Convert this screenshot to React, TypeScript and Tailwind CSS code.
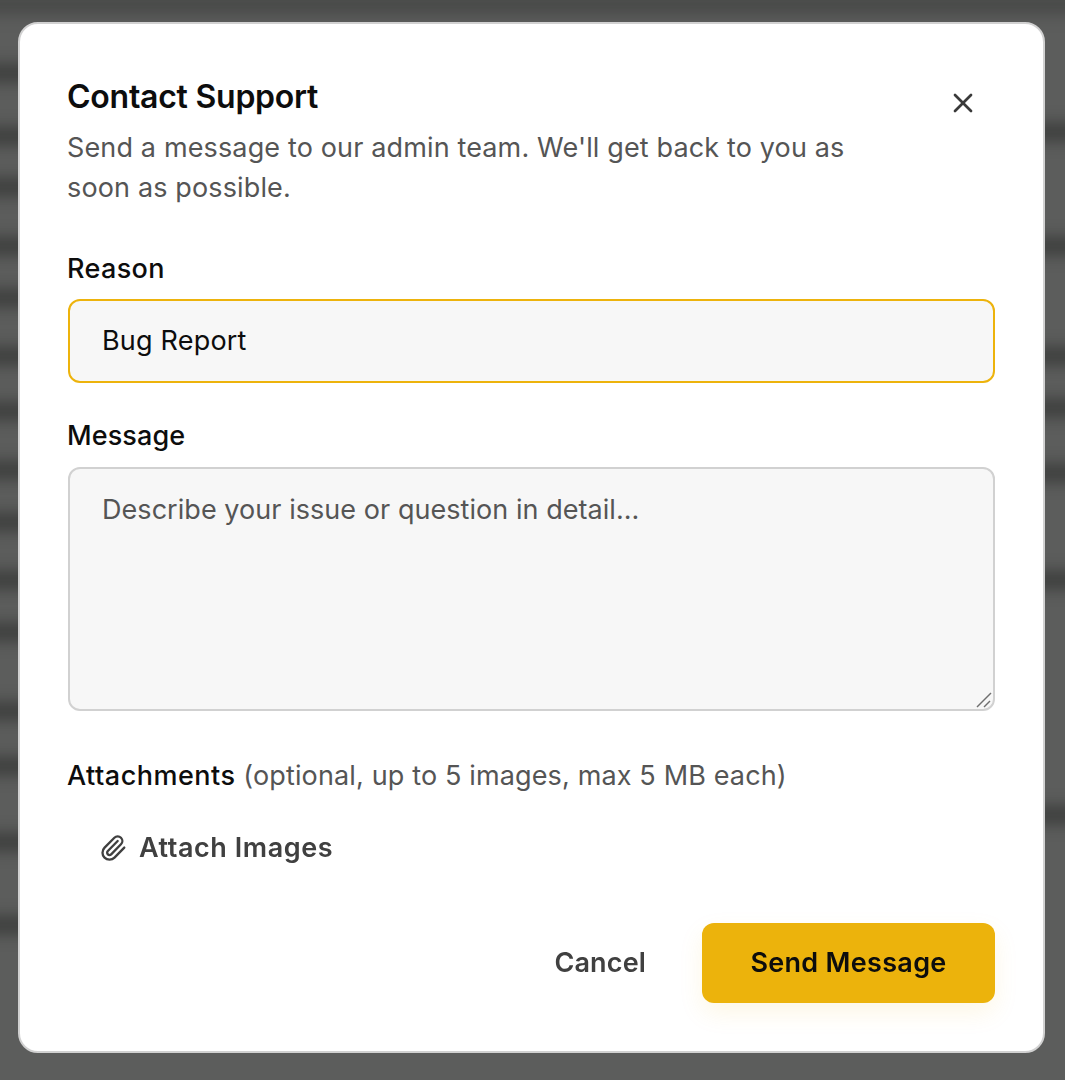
import { Paperclip, X } from "lucide-react";

const leftRows = [65, 128, 179, 238, 290, 348, 403, 462, 514, 572, 624, 703, 758, 834, 917];
const rightRows = [124, 238, 348, 400, 465, 572, 807];

function Resize() {
  return (
    <svg width="16" height="16" viewBox="0 0 16 16" className="absolute bottom-[1px] right-[1px]" fill="none" stroke="#6f6f6f" strokeWidth="1.4">
      <path d="M1 15 L15 1" />
      <path d="M8 15 L14 9" />
    </svg>
  );
}

export default function App() {
  return (
    <div className="relative h-[1080px] w-[1065px] overflow-hidden bg-[#5c5d5c] font-['Inter',sans-serif]">
      <div className="absolute inset-0 blur-[8px]">
        <div className="absolute left-[-40px] right-[-40px] top-[-6px] h-[20px] bg-[#474847]" />
        {leftRows.map((y) => (
          <div key={y} className="absolute left-[-60px] h-[16px] w-[260px] bg-[#393a39]" style={{ top: y }} />
        ))}
        {rightRows.map((y) => (
          <div key={y} className="absolute right-[-60px] h-[16px] w-[260px] bg-[#393a39]" style={{ top: y }} />
        ))}
      </div>
      <div className="relative pl-[18px] pt-[22px]">
        <div className="relative flex h-[1031px] w-[1027px] flex-col rounded-[20px] border-2 border-[#d1d1d1] bg-white pl-[48px] pr-[48px] pt-[51px]">
          <button className="absolute right-[64px] top-[63px] text-[#3a3a3a]">
            <X size={32} strokeWidth={2} />
          </button>
          <h2 className="ml-[-1px] text-[32px] font-semibold leading-[44px] tracking-[-0.25px] text-[#0d0d0d]">Contact Support</h2>
          <p className="ml-[-1px] mt-[9px] w-[800px] text-[27px] leading-[40px] tracking-[0.14px] text-[#555555]">
            Send a message to our admin team. We'll get back to you as soon as possible.
          </p>

          <label className="ml-[-1px] mt-[41px] text-[27px] font-medium leading-[40px] tracking-[0.35px] text-[#0d0d0d]">Reason</label>
          <div className="mt-[10px] flex h-[84px] items-center rounded-[12px] border-2 border-[#edb30c] bg-[#f7f7f7] pl-[32px] pr-[32px] pt-[1px] text-[27px] tracking-[0.2px] text-[#0d0d0d]">
            Bug Report
          </div>

          <label className="ml-[-1px] mt-[33px] text-[27px] font-medium leading-[40px] tracking-[0.1px] text-[#0d0d0d]">Message</label>
          <div className="relative mt-[11px] h-[244px] rounded-[12px] border-2 border-[#d1d1d1] bg-[#f7f7f7] pl-[32px] pr-[32px] pt-[21px] text-[27px] leading-[40px] tracking-[0.05px] text-[#555555]">
            Describe your issue or question in detail...
            <Resize />
          </div>

          <div className="ml-[-1px] mt-[45px] text-[27px] leading-[40px] tracking-[0.14px] text-[#555555]">
            <span className="font-medium tracking-[0.5px] text-[#0d0d0d]">Attachments</span> (optional, up to 5 images, max 5 MB each)
          </div>
          <div className="mt-[32px] flex items-center gap-[12px] pl-[32px] text-[27px] font-semibold leading-[40px] tracking-[0.55px] text-[#404040]">
            <Paperclip size={28} strokeWidth={2} className="ml-[-1px]" />
            Attach Images
          </div>

          <div className="mt-[55px] flex items-center justify-end gap-[56px]">
            <span className="pt-[1px] text-[27px] font-semibold tracking-[0.15px] text-[#404040]">Cancel</span>
            <button className="h-[80px] w-[293px] rounded-[12px] bg-[#ecb30c] pt-[1px] text-[27px] font-semibold tracking-[0.3px] text-[#0d0d0d] shadow-[0_10px_24px_rgba(237,179,12,0.1)]">
              Send Message
            </button>
          </div>
        </div>
      </div>
    </div>
  );
}
